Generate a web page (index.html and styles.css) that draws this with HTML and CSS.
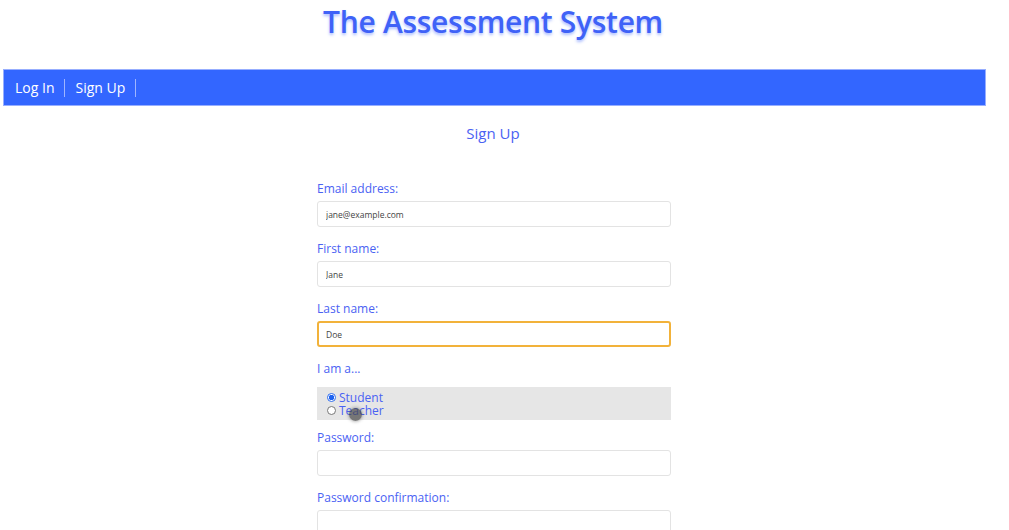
FILE: index.html
```html
<!DOCTYPE html>
<html>
<head>
<meta charset="utf-8">
<link rel="stylesheet" href="styles.css">
</head>
<body>
<header class="title-wrap">
  <h1 class="title">The Assessment System</h1>
</header>
<nav class="navbar">
  <a class="nav-link" href="#">Log In</a>
  <a class="nav-link" href="#">Sign Up</a>
</nav>
<main class="content">
  <h2 class="page-title">Sign Up</h2>
  <form class="form">
    <div class="field">
      <label class="label">Email address:</label>
      <input class="input" type="text" value="jane@example.com">
    </div>
    <div class="field">
      <label class="label">First name:</label>
      <input class="input" type="text" value="Jane">
    </div>
    <div class="field">
      <label class="label">Last name:</label>
      <input class="input input-focus" type="text" value="Doe">
    </div>
    <div class="field">
      <label class="label">I am a...</label>
      <div class="radio-box">
        <label class="radio-row"><span class="radio checked"></span>Student</label>
        <label class="radio-row"><span class="radio"></span>Teacher</label>
        <span class="cursor-dot"></span>
      </div>
    </div>
    <div class="field">
      <label class="label">Password:</label>
      <input class="input" type="password">
    </div>
    <div class="field">
      <label class="label">Password confirmation:</label>
      <input class="input" type="password">
    </div>
  </form>
</main>
</body>
</html>
```
FILE: styles.css
```css
html, body {
  margin: 0;
  padding: 0;
  background: #ffffff;
}
body {
  font-family: "Open Sans", "Noto Sans", sans-serif;
  color: #4a5ef5;
  overflow: hidden;
}
.title-wrap {
  width: 986px;
  display: flex;
  justify-content: center;
  padding-top: 2px;
  height: 69px;
  box-sizing: border-box;
}
.title {
  margin: 0;
  font-size: 30px;
  font-weight: 600;
  line-height: 40px;
  color: #3f62f7;
  text-shadow: 0 2px 3px rgba(70, 110, 255, 0.45);
  letter-spacing: -0.3px;
}
.navbar {
  margin-left: 3px;
  width: 983px;
  height: 37px;
  box-sizing: border-box;
  background: #3366ff;
  border: 1px solid #97aeff;
  display: flex;
  align-items: center;
  padding-left: 1px;
}
.nav-link {
  color: #ffffff;
  text-decoration: none;
  font-size: 14px;
  padding: 0 10px;
  line-height: 18px;
  border-right: 1px solid #9fb5ff;
}
.content {
  width: 986px;
  display: flex;
  flex-direction: column;
  align-items: center;
}
.page-title {
  margin: 15px 0 0;
  font-size: 15px;
  font-weight: 500;
  line-height: 24px;
  color: #4a62f3;
}
.form {
  width: 354px;
  margin-top: 36px;
  margin-left: 2px;
  display: flex;
  flex-direction: column;
  gap: 14px;
}
.field {
  display: flex;
  flex-direction: column;
  gap: 4px;
}
.label {
  font-size: 12px;
  line-height: 16px;
  color: #4a62f3;
}
.input {
  height: 26px;
  box-sizing: border-box;
  border: 1px solid #e3e3e3;
  border-radius: 3px;
  padding: 0 8px;
  font-family: "Open Sans", sans-serif;
  font-size: 8.5px;
  color: #444;
  background: #fff;
  outline: none;
}
.input-focus {
  border: 2px solid #f2b23a;
  padding: 0 7px;
}
.radio-box {
  position: relative;
  margin-top: 6px;
  margin-bottom: -4px;
  height: 33px;
  background: #e6e6e6;
  padding: 4px 0 0 10px;
  box-sizing: border-box;
  display: flex;
  flex-direction: column;
}
.radio-row {
  display: flex;
  align-items: center;
  font-size: 12px;
  line-height: 13px;
  color: #4a62f3;
}
.radio {
  width: 7px;
  height: 7px;
  border: 1px solid #777;
  border-radius: 50%;
  background: #fff;
  margin-right: 3px;
  box-sizing: content-box;
}
.radio.checked {
  border-color: #2f6df0;
  background: radial-gradient(circle, #1e63f0 0 2.5px, #fff 3px);
}
.cursor-dot {
  position: absolute;
  left: 32px;
  top: 21px;
  width: 13px;
  height: 13px;
  border-radius: 50%;
  background: rgba(70, 70, 70, 0.7);
  box-shadow: 0 0 3px 1px rgba(70, 70, 70, 0.35);
}
```
